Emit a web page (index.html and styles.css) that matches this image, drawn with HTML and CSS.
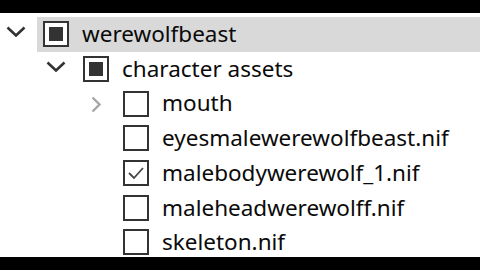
FILE: index.html
```html
<!DOCTYPE html>
<html lang="en">
<head>
    <meta charset="UTF-8">
    <meta name="viewport" content="width=device-width, initial-scale=1.0">
    <title>Tree</title>
    <link rel="stylesheet" href="styles.css">
</head>
<body>
  <div class="bar"></div>
  <div class="tree">
    <ul class="tree-list">
      <li class="node level-1">
        <span class="toggle">
          <svg width="20" height="11" viewBox="0 0 20 11"><polyline points="1.5,1.5 10,9.5 18.5,1.5" class="chev-dark"/></svg>
        </span>
        <span class="item selected">
          <span class="box box--mixed"></span>
          <span class="label">werewolfbeast</span>
        </span>
      </li>
      <li class="node level-2">
        <span class="toggle">
          <svg width="20" height="11" viewBox="0 0 20 11"><polyline points="1.5,1.5 10,9.5 18.5,1.5" class="chev-dark"/></svg>
        </span>
        <span class="item">
          <span class="box box--mixed"></span>
          <span class="label">character assets</span>
        </span>
      </li>
      <li class="node level-3">
        <span class="toggle toggle--right">
          <svg width="10" height="17" viewBox="0 0 10 17"><polyline points="1.5,1.5 8.5,8.5 1.5,15.5" class="chev-light"/></svg>
        </span>
        <span class="item">
          <span class="box"></span>
          <span class="label">mouth</span>
        </span>
      </li>
      <li class="node level-3">
        <span class="toggle"></span>
        <span class="item">
          <span class="box"></span>
          <span class="label">eyesmalewerewolfbeast.nif</span>
        </span>
      </li>
      <li class="node level-3">
        <span class="toggle"></span>
        <span class="item">
          <span class="box">
            <svg width="22" height="22" viewBox="0 0 22 22"><polyline points="4,11 9,16 18,6" class="tick"/></svg>
          </span>
          <span class="label">malebodywerewolf_1.nif</span>
        </span>
      </li>
      <li class="node level-3">
        <span class="toggle"></span>
        <span class="item">
          <span class="box"></span>
          <span class="label">maleheadwerewolff.nif</span>
        </span>
      </li>
      <li class="node level-3">
        <span class="toggle"></span>
        <span class="item">
          <span class="box"></span>
          <span class="label">skeleton.nif</span>
        </span>
      </li>
    </ul>
  </div>
  <div class="bar"></div>
</body>
</html>
```

FILE: styles.css
```css
body {
  margin: 0;
  width: 480px;
  height: 270px;
  overflow: hidden;
  background: white;
  font-family: "Noto Sans", "Open Sans", sans-serif;
  color: #111;
}

.bar {
  height: 13px;
  background: black;
}

.tree {
  height: 244px;
  overflow: hidden;
  padding-top: 4px;
  box-sizing: border-box;
}

.tree-list {
  list-style: none;
  margin: 0;
  padding: 0;
}

.node {
  display: flex;
  height: 34.7px;
}

.level-2 {
  padding-left: 40px;
}

.level-3 {
  padding-left: 80px;
}

.toggle {
  width: 37px;
  flex: none;
  display: flex;
  align-items: center;
  padding-left: 6px;
  box-sizing: border-box;
}

.toggle svg {
  margin-top: -5px;
}

.toggle--right {
  padding-left: 11px;
}

.toggle--right svg {
  margin-top: 2px;
}

.chev-dark {
  fill: none;
  stroke: #333;
  stroke-width: 2.6;
}

.chev-light {
  fill: none;
  stroke: #a6a6a6;
  stroke-width: 2.4;
}

.item {
  flex: 1;
  display: flex;
  align-items: center;
  padding-left: 6px;
}

.selected {
  background: #d9d9d9;
}

.box {
  width: 26px;
  height: 26px;
  border: 2.5px solid #333;
  box-sizing: border-box;
  background: white;
  display: flex;
  align-items: center;
  justify-content: center;
  flex: none;
}

.box--mixed::after {
  content: "";
  width: 14px;
  height: 14px;
  background: #333;
}

.tick {
  fill: none;
  stroke: #444;
  stroke-width: 1.8;
}

.label {
  margin-left: 13px;
  font-size: 22.5px;
  line-height: 1;
  white-space: nowrap;
  color: #0a0a0a;
}
```
